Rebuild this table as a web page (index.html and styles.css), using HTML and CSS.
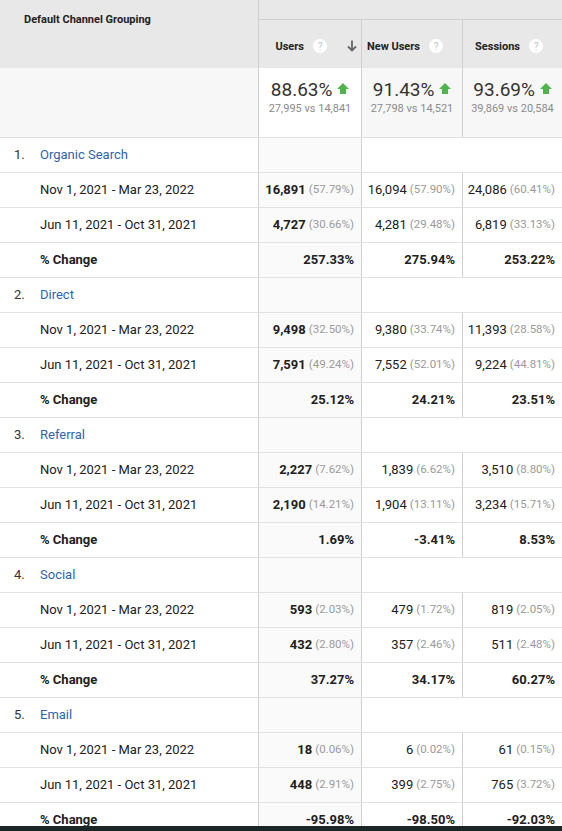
FILE: index.html
```html
<!DOCTYPE html>
<html lang="en">
<head>
  <meta charset="UTF-8">
  <title>Default Channel Grouping</title>
  <meta name="viewport" content="width=device-width, initial-scale=1">
  <link rel="stylesheet" href="styles.css">
</head>
<body>
  <div class="report">
    <div class="head">
      <div class="head-dim">Default Channel Grouping</div>
      <div class="head-group"></div>
      <div class="head-metric users">
        <span>Users</span><span class="help">?</span>
        <svg class="sort" width="10" height="12" viewBox="0 0 10 12"><path d="M5 0.5V10.5M1 6.5L5 10.5L9 6.5" fill="none" stroke="#666" stroke-width="1.8"/></svg>
      </div>
      <div class="head-metric"><span>New Users</span><span class="help">?</span></div>
      <div class="head-metric"><span>Sessions</span><span class="help">?</span></div>
    </div>

    <div class="summary">
      <div class="sum-dim"></div>
      <div class="sum sorted">
        <div class="sum-big">88.63% <svg class="up" width="12" height="11" viewBox="0 0 12 11"><path d="M6 0L12 6H9V11H3V6H0Z" fill="#4fb44b"/></svg></div>
        <div class="sum-sub">27,995 vs 14,841</div>
      </div>
      <div class="sum">
        <div class="sum-big">91.43% <svg class="up" width="12" height="11" viewBox="0 0 12 11"><path d="M6 0L12 6H9V11H3V6H0Z" fill="#4fb44b"/></svg></div>
        <div class="sum-sub">27,798 vs 14,521</div>
      </div>
      <div class="sum">
        <div class="sum-big">93.69% <svg class="up" width="12" height="11" viewBox="0 0 12 11"><path d="M6 0L12 6H9V11H3V6H0Z" fill="#4fb44b"/></svg></div>
        <div class="sum-sub">39,869 vs 20,584</div>
      </div>
    </div>

    <!-- Organic Search -->
    <div class="row channel"><div class="dim"><span class="idx">1.</span><a class="name">Organic Search</a></div><div class="cell sorted"></div><div class="cell wide"></div></div>
    <div class="row"><div class="dim date">Nov 1, 2021 - Mar 23, 2022</div><div class="cell sorted"><b>16,891</b> <span class="pct">(57.79%)</span></div><div class="cell">16,094 <span class="pct">(57.90%)</span></div><div class="cell">24,086 <span class="pct">(60.41%)</span></div></div>
    <div class="row"><div class="dim date">Jun 11, 2021 - Oct 31, 2021</div><div class="cell sorted"><b>4,727</b> <span class="pct">(30.66%)</span></div><div class="cell">4,281 <span class="pct">(29.48%)</span></div><div class="cell">6,819 <span class="pct">(33.13%)</span></div></div>
    <div class="row change"><div class="dim date">% Change</div><div class="cell sorted">257.33%</div><div class="cell">275.94%</div><div class="cell">253.22%</div></div>

    <!-- Direct -->
    <div class="row channel"><div class="dim"><span class="idx">2.</span><a class="name">Direct</a></div><div class="cell sorted"></div><div class="cell wide"></div></div>
    <div class="row"><div class="dim date">Nov 1, 2021 - Mar 23, 2022</div><div class="cell sorted"><b>9,498</b> <span class="pct">(32.50%)</span></div><div class="cell">9,380 <span class="pct">(33.74%)</span></div><div class="cell">11,393 <span class="pct">(28.58%)</span></div></div>
    <div class="row"><div class="dim date">Jun 11, 2021 - Oct 31, 2021</div><div class="cell sorted"><b>7,591</b> <span class="pct">(49.24%)</span></div><div class="cell">7,552 <span class="pct">(52.01%)</span></div><div class="cell">9,224 <span class="pct">(44.81%)</span></div></div>
    <div class="row change"><div class="dim date">% Change</div><div class="cell sorted">25.12%</div><div class="cell">24.21%</div><div class="cell">23.51%</div></div>

    <!-- Referral -->
    <div class="row channel"><div class="dim"><span class="idx">3.</span><a class="name">Referral</a></div><div class="cell sorted"></div><div class="cell wide"></div></div>
    <div class="row"><div class="dim date">Nov 1, 2021 - Mar 23, 2022</div><div class="cell sorted"><b>2,227</b> <span class="pct">(7.62%)</span></div><div class="cell">1,839 <span class="pct">(6.62%)</span></div><div class="cell">3,510 <span class="pct">(8.80%)</span></div></div>
    <div class="row"><div class="dim date">Jun 11, 2021 - Oct 31, 2021</div><div class="cell sorted"><b>2,190</b> <span class="pct">(14.21%)</span></div><div class="cell">1,904 <span class="pct">(13.11%)</span></div><div class="cell">3,234 <span class="pct">(15.71%)</span></div></div>
    <div class="row change"><div class="dim date">% Change</div><div class="cell sorted">1.69%</div><div class="cell">-3.41%</div><div class="cell">8.53%</div></div>

    <!-- Social -->
    <div class="row channel"><div class="dim"><span class="idx">4.</span><a class="name">Social</a></div><div class="cell sorted"></div><div class="cell wide"></div></div>
    <div class="row"><div class="dim date">Nov 1, 2021 - Mar 23, 2022</div><div class="cell sorted"><b>593</b> <span class="pct">(2.03%)</span></div><div class="cell">479 <span class="pct">(1.72%)</span></div><div class="cell">819 <span class="pct">(2.05%)</span></div></div>
    <div class="row"><div class="dim date">Jun 11, 2021 - Oct 31, 2021</div><div class="cell sorted"><b>432</b> <span class="pct">(2.80%)</span></div><div class="cell">357 <span class="pct">(2.46%)</span></div><div class="cell">511 <span class="pct">(2.48%)</span></div></div>
    <div class="row change"><div class="dim date">% Change</div><div class="cell sorted">37.27%</div><div class="cell">34.17%</div><div class="cell">60.27%</div></div>

    <!-- Email -->
    <div class="row channel"><div class="dim"><span class="idx">5.</span><a class="name">Email</a></div><div class="cell sorted"></div><div class="cell wide"></div></div>
    <div class="row"><div class="dim date">Nov 1, 2021 - Mar 23, 2022</div><div class="cell sorted"><b>18</b> <span class="pct">(0.06%)</span></div><div class="cell">6 <span class="pct">(0.02%)</span></div><div class="cell">61 <span class="pct">(0.15%)</span></div></div>
    <div class="row"><div class="dim date">Jun 11, 2021 - Oct 31, 2021</div><div class="cell sorted"><b>448</b> <span class="pct">(2.91%)</span></div><div class="cell">399 <span class="pct">(2.75%)</span></div><div class="cell">765 <span class="pct">(3.72%)</span></div></div>
    <div class="row change"><div class="dim date">% Change</div><div class="cell sorted">-95.98%</div><div class="cell">-98.50%</div><div class="cell">-92.03%</div></div>
  </div>
  <div class="taskbar"></div>
</body>
</html>
```

FILE: styles.css
```css
* {
  box-sizing: border-box;
}
body {
  margin: 0;
  background: #fff;
  color: #212121;
  font-family: Roboto, "Liberation Sans", sans-serif;
  font-size: 13px;
}
.report {
  width: 562px;
}
.head, .summary, .row {
  display: grid;
  grid-template-columns: 258px 103px 101px 100px;
}

/* header */
.head {
  grid-template-rows: 20px 48px;
  background: #e8e8e8;
}
.head-dim {
  grid-row: 1 / 3;
  padding: 13px 0 0 24px;
  font-size: 11px;
  font-weight: bold;
  color: #222;
}
.head-group {
  grid-column: 2 / 5;
  border-left: 1px solid #d0d0d0;
  border-bottom: 1px solid #d0d0d0;
}
.head-metric {
  display: flex;
  align-items: center;
  justify-content: flex-end;
  gap: 9px;
  padding: 4px 19px 0 0;
  border-left: 1px solid #d0d0d0;
  font-size: 11px;
  font-weight: bold;
  color: #222;
}
.head-metric.users {
  padding-right: 4px;
}
.help {
  display: inline-flex;
  align-items: center;
  justify-content: center;
  width: 14px;
  height: 14px;
  border-radius: 50%;
  background: #fff;
  color: #c2c2c2;
  font-size: 10px;
  font-weight: normal;
}
.sort {
  margin-left: 11px;
}

/* summary */
.summary {
  height: 70px;
  border-bottom: 1px solid #e2e2e2;
}
.sum-dim {
  background: #f7f7f7;
}
.sum {
  background: #f7f7f7;
  border-left: 1px solid #d0d0d0;
  text-align: center;
  padding-top: 10px;
}
.sum.sorted {
  background: #fff;
}
.sum-big {
  font-size: 19px;
  color: #333;
  line-height: 24px;
}
.up {
  vertical-align: 2px;
}
.sum-sub {
  font-size: 11px;
  color: #8c8c8c;
  line-height: 14px;
}

/* rows */
.row {
  height: 35px;
  border-bottom: 1px solid #e2e2e2;
}
.dim {
  display: flex;
  align-items: center;
  padding: 0 0 2px 14px;
  color: #212121;
}
.dim.date {
  padding-left: 40px;
}
.idx {
  width: 26px;
  color: #333;
}
.name {
  color: #2d65ad;
}
.cell {
  display: flex;
  align-items: center;
  justify-content: flex-end;
  gap: 3px;
  padding: 0 7px 2px 0;
  border-left: 1px solid #d0d0d0;
  white-space: nowrap;
}
.cell.sorted {
  background: #fafafa;
}
.cell.wide {
  grid-column: 3 / 5;
}
.pct {
  font-size: 11.5px;
  color: #9a9a9a;
}
.change {
  font-weight: bold;
}
.change .dim {
  font-weight: bold;
}
.taskbar {
  position: fixed;
  left: 0;
  right: 0;
  bottom: 0;
  height: 5px;
  background: #1b2626;
}
```
